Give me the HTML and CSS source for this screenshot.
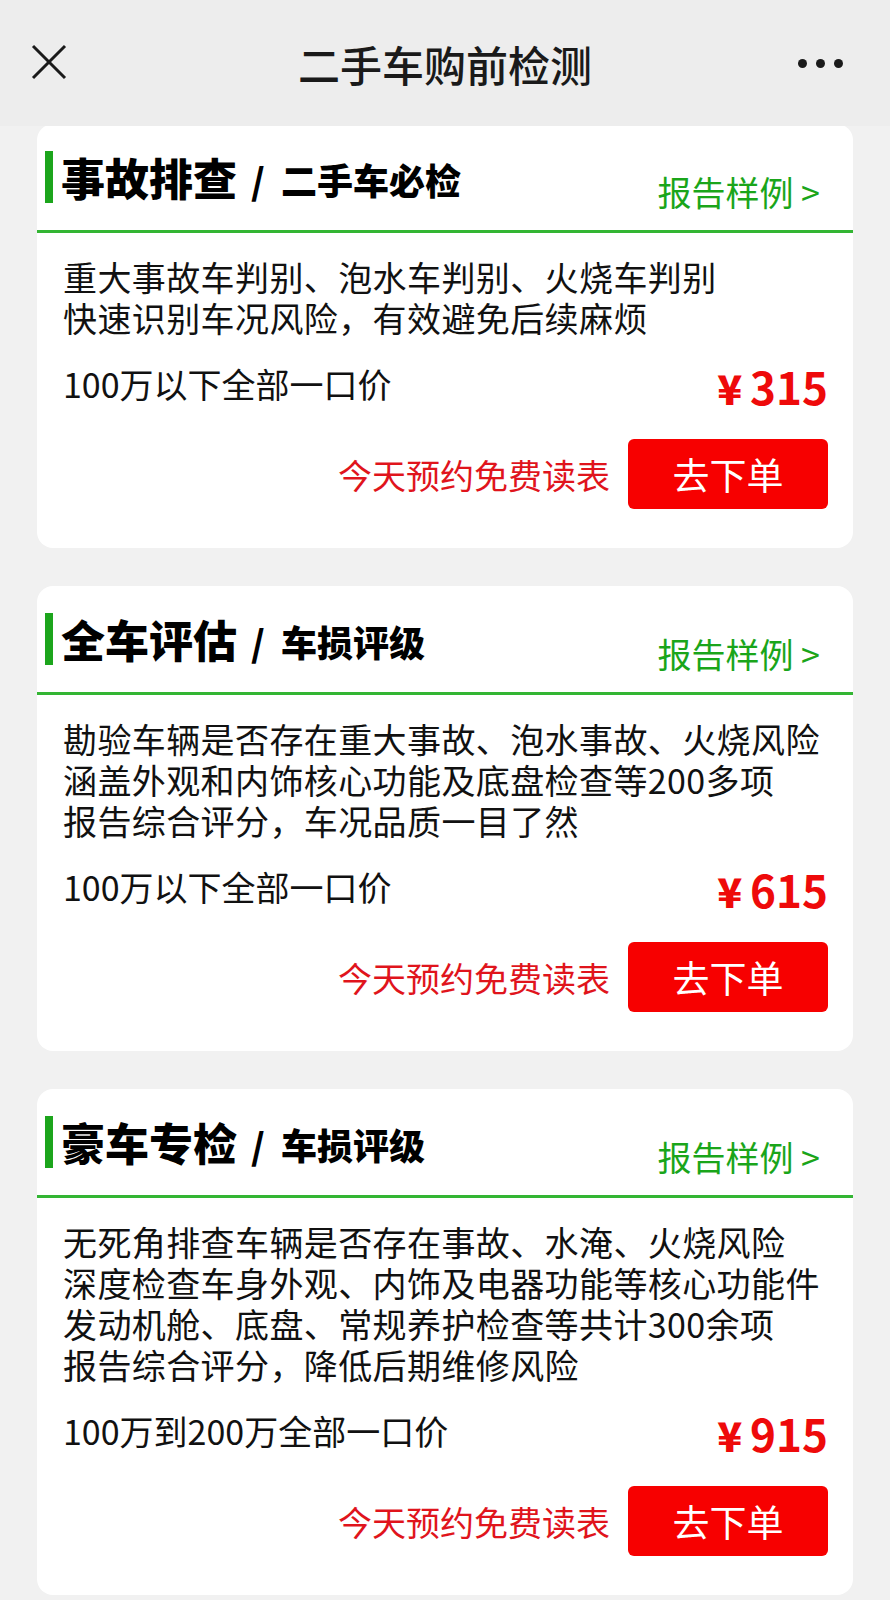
FILE: index.html
```html
<!DOCTYPE html>
<html lang="zh-CN">
<head>
    <meta charset="UTF-8">
    <meta name="viewport" content="width=device-width, initial-scale=1.0">
    <title>二手车购前检测</title>
    <link rel="stylesheet" href="styles.css">
</head>
<body>
    <div class="topbar">
        <div class="topbar-left">
            <svg class="close-icon" width="36" height="36" viewBox="0 0 36 36">
                <line x1="2" y1="2" x2="34" y2="34" stroke="#1a1a1a" stroke-width="3"/>
                <line x1="34" y1="2" x2="2" y2="34" stroke="#1a1a1a" stroke-width="3"/>
            </svg>
        </div>
        <div class="topbar-title">二手车购前检测</div>
        <div class="topbar-right">
            <span class="dot"></span><span class="dot"></span><span class="dot"></span>
        </div>
    </div>

    <div class="container">
        <div class="card">
            <div class="card-head">
                <div class="card-title">
                    <span class="bar"></span>
                    <span class="title-main">事故排查</span>
                    <span class="title-slash">/</span>
                    <span class="title-sub">二手车必检</span>
                </div>
                <a class="sample-link">报告样例 &gt;</a>
            </div>
            <div class="card-body">
                <div class="desc">
                    <div>重大事故车判别、泡水车判别、火烧车判别</div>
                    <div>快速识别车况风险，有效避免后续麻烦</div>
                </div>
                <div class="price-row">
                    <span class="price-note">100万以下全部一口价</span>
                    <span class="price"><span class="yen">¥</span>315</span>
                </div>
                <div class="order-row">
                    <span class="promo">今天预约免费读表</span>
                    <button class="order-btn">去下单</button>
                </div>
            </div>
        </div>

        <div class="card">
            <div class="card-head">
                <div class="card-title">
                    <span class="bar"></span>
                    <span class="title-main">全车评估</span>
                    <span class="title-slash">/</span>
                    <span class="title-sub">车损评级</span>
                </div>
                <a class="sample-link">报告样例 &gt;</a>
            </div>
            <div class="card-body">
                <div class="desc">
                    <div>勘验车辆是否存在重大事故、泡水事故、火烧风险</div>
                    <div>涵盖外观和内饰核心功能及底盘检查等200多项</div>
                    <div>报告综合评分，车况品质一目了然</div>
                </div>
                <div class="price-row">
                    <span class="price-note">100万以下全部一口价</span>
                    <span class="price"><span class="yen">¥</span>615</span>
                </div>
                <div class="order-row">
                    <span class="promo">今天预约免费读表</span>
                    <button class="order-btn">去下单</button>
                </div>
            </div>
        </div>

        <div class="card">
            <div class="card-head">
                <div class="card-title">
                    <span class="bar"></span>
                    <span class="title-main">豪车专检</span>
                    <span class="title-slash">/</span>
                    <span class="title-sub">车损评级</span>
                </div>
                <a class="sample-link">报告样例 &gt;</a>
            </div>
            <div class="card-body">
                <div class="desc">
                    <div>无死角排查车辆是否存在事故、水淹、火烧风险</div>
                    <div>深度检查车身外观、内饰及电器功能等核心功能件</div>
                    <div>发动机舱、底盘、常规养护检查等共计300余项</div>
                    <div>报告综合评分，降低后期维修风险</div>
                </div>
                <div class="price-row">
                    <span class="price-note">100万到200万全部一口价</span>
                    <span class="price"><span class="yen">¥</span>915</span>
                </div>
                <div class="order-row">
                    <span class="promo">今天预约免费读表</span>
                    <button class="order-btn">去下单</button>
                </div>
            </div>
        </div>
    </div>
</body>
</html>
```

FILE: styles.css
```css
/* General Styles */
body {
    font-family: "Noto Sans CJK SC", "Noto Sans", sans-serif;
    margin: 0;
    padding: 0;
    background-color: #f1f1f1;
    color: #111;
}

.topbar {
    position: relative;
    z-index: 1;
    height: 126px;
    background-color: #ededed;
    display: grid;
    grid-template-columns: 1fr auto 1fr;
    align-items: center;
    padding: 0 31px;
    box-sizing: border-box;
}
.topbar-left {
    display: flex;
    align-items: center;
}
.close-icon {
    display: block;
    margin-top: -2px;
}
.topbar-title {
    font-size: 42px;
    font-weight: 500;
    color: #1a1a1a;
    line-height: 56px;
    margin-top: 2px;
}
.topbar-right {
    display: flex;
    justify-content: flex-end;
    gap: 9px;
    padding-right: 16px;
}
.dot {
    width: 9px;
    height: 9px;
    border-radius: 50%;
    background-color: #1a1a1a;
}

/* Cards */
.container {
    padding: 0 37px;
    margin-top: -2px;
}
.card {
    background-color: white;
    border-radius: 16px;
    margin-bottom: 38px;
}
.card-head {
    display: flex;
    justify-content: space-between;
    padding: 27px 33px 0 8px;
    height: 79px;
    border-bottom: 3px solid #33b533;
}
.card-title {
    display: flex;
    align-items: flex-end;
    height: 52px;
    font-weight: 900;
    color: #000;
}
.bar {
    width: 8px;
    height: 52px;
    background-color: #1ca51c;
    margin-right: 8px;
    align-self: stretch;
}
.title-main {
    font-size: 44px;
    line-height: 52px;
}
.title-slash {
    font-size: 36px;
    line-height: 48px;
    margin: 0 16px 0 14px;
}
.title-sub {
    font-size: 36px;
    line-height: 48px;
}
.sample-link {
    font-size: 34px;
    line-height: 40px;
    color: #1aa51a;
    margin-top: 21px;
}

.card-body {
    padding: 23px 25px 39px 26px;
}
.desc {
    font-size: 34px;
    line-height: 41px;
    letter-spacing: 0.4px;
    color: #111;
}
.price-row {
    display: flex;
    justify-content: space-between;
    align-items: center;
    height: 50px;
    margin-top: 20px;
}
.price-note {
    font-size: 34px;
    color: #111;
}
.price {
    font-size: 44px;
    font-weight: 700;
    color: #ee0a0a;
    margin-top: 6px;
}
.yen {
    margin-right: 8px;
    font-size: 41px;
    font-weight: 900;
}
.order-row {
    display: flex;
    justify-content: flex-end;
    align-items: center;
    margin-top: 31px;
    gap: 18px;
}
.promo {
    font-size: 34px;
    color: #e0141c;
}
.order-btn {
    width: 200px;
    height: 70px;
    border: none;
    border-radius: 6px;
    background-color: #f70000;
    color: white;
    font-family: inherit;
    font-size: 37px;
    cursor: pointer;
}
```
